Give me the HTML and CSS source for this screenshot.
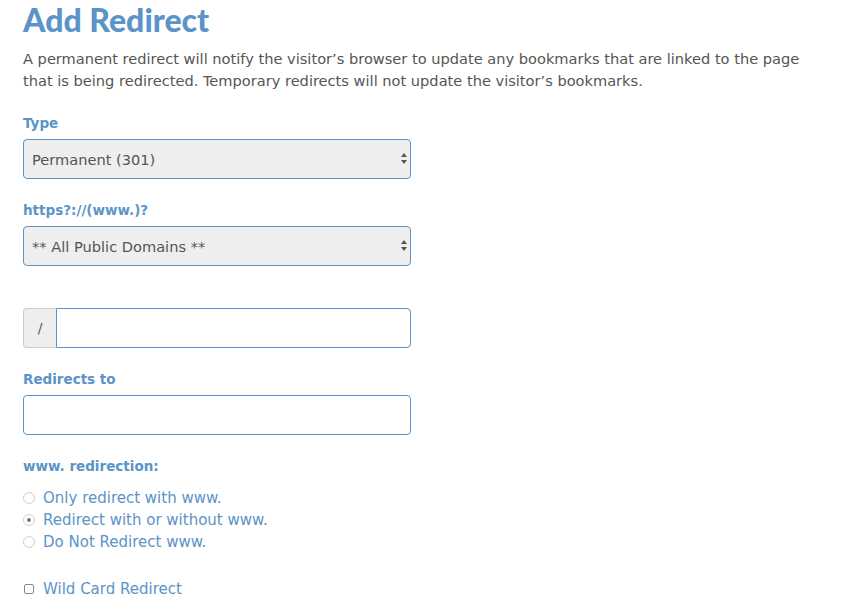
FILE: index.html
```html
<!DOCTYPE html>
<html lang="en">
<head>
    <meta charset="UTF-8">
    <title>Add Redirect</title>
    <link rel="stylesheet" href="styles.css">
</head>
<body>
    <div class="container">
        <h1>Add Redirect</h1>
        <p class="intro">A permanent redirect will notify the visitor’s browser to update any bookmarks that are linked to the page that is being redirected. Temporary redirects will not update the visitor’s bookmarks.</p>

        <form id="redirect-form">
            <div class="form-group">
                <label for="redirect-type">Type</label>
                <div class="select-wrap">
                    <select id="redirect-type">
                        <option value="301">Permanent (301)</option>
                        <option value="302">Temporary (302)</option>
                    </select>
                </div>
            </div>

            <div class="form-group">
                <label for="redirect-domain">https?://(www.)?</label>
                <div class="select-wrap">
                    <select id="redirect-domain">
                        <option value="all">** All Public Domains **</option>
                    </select>
                </div>
            </div>

            <div class="form-group spaced">
                <div class="input-group">
                    <span class="addon">/</span>
                    <input type="text" id="redirect-path">
                </div>
            </div>

            <div class="form-group">
                <label for="redirect-to">Redirects to</label>
                <input type="text" id="redirect-to" class="field">
            </div>

            <div class="form-group">
                <label>www. redirection:</label>
                <div class="radio-list">
                    <label class="choice"><input type="radio" name="www" value="only"> Only redirect with www.</label>
                    <label class="choice"><input type="radio" name="www" value="either" checked> Redirect with or without www.</label>
                    <label class="choice"><input type="radio" name="www" value="none"> Do Not Redirect www.</label>
                </div>
            </div>

            <div class="form-group wildcard">
                <label class="choice"><input type="checkbox" id="wildcard"> Wild Card Redirect</label>
            </div>
        </form>
    </div>
</body>
</html>
```

FILE: styles.css
```css
:root {
    --blue: #5b94c8;
    --text: #555;
    --grey: #eee;
}

* {
    margin: 0;
    padding: 0;
    box-sizing: border-box;
}

body {
    font-family: 'DejaVu Sans', Verdana, sans-serif;
    background-color: white;
    color: var(--text);
}

.container {
    padding: 0 23px;
}

h1 {
    font-family: Lato, 'DejaVu Sans', sans-serif;
    font-size: 32px;
    font-weight: 900;
    color: var(--blue);
    line-height: 40px;
    margin-bottom: 8px;
}

.intro {
    font-size: 14.6px;
    line-height: 22px;
    margin-bottom: 22px;
    max-width: 790px;
}

.form-group {
    margin-bottom: 22px;
}

.form-group.spaced {
    margin-top: 42px;
}

.form-group.wildcard {
    margin-top: 25px;
}

label {
    display: block;
    font-size: 13.5px;
    font-weight: bold;
    color: var(--blue);
    line-height: 18px;
    margin-bottom: 7px;
}

.select-wrap {
    position: relative;
    width: 388px;
}

.select-wrap::after {
    content: '';
    position: absolute;
    right: 4px;
    top: 14px;
    width: 0;
    height: 0;
    border-left: 3.5px solid transparent;
    border-right: 3.5px solid transparent;
    border-bottom: 4px solid #555;
    pointer-events: none;
}

.select-wrap::before {
    content: '';
    position: absolute;
    right: 4px;
    top: 21px;
    width: 0;
    height: 0;
    border-left: 3.5px solid transparent;
    border-right: 3.5px solid transparent;
    border-top: 4px solid #555;
    pointer-events: none;
}

select {
    appearance: none;
    -webkit-appearance: none;
    width: 100%;
    height: 40px;
    padding: 0 8px;
    font-family: inherit;
    font-size: 14.6px;
    color: var(--text);
    background-color: var(--grey);
    border: 1px solid var(--blue);
    border-radius: 4px;
}

.input-group {
    display: flex;
    width: 388px;
    height: 40px;
}

.addon {
    width: 33px;
    background-color: var(--grey);
    border: 1px solid #ccc;
    border-right: none;
    border-radius: 4px 0 0 4px;
    display: flex;
    align-items: center;
    justify-content: center;
    font-size: 14px;
    color: var(--text);
}

.input-group input {
    flex: 1;
    border: 1px solid var(--blue);
    border-radius: 0 4px 4px 0;
    font-family: inherit;
    font-size: 14px;
    padding: 0 9px;
}

.field {
    width: 388px;
    height: 40px;
    border: 1px solid var(--blue);
    border-radius: 4px;
    font-family: inherit;
    font-size: 14px;
    padding: 0 9px;
}

.radio-list {
    margin-top: 12px;
}

.choice {
    display: flex;
    align-items: center;
    font-weight: normal;
    font-size: 15px;
    line-height: 22px;
    margin-bottom: 0;
}

.choice input {
    appearance: none;
    -webkit-appearance: none;
    margin: 0 8px 0 0;
    width: 12px;
    height: 12px;
    border: 1px solid #d0d0d0;
    background-color: white;
    flex-shrink: 0;
}

.choice input[type="radio"] {
    border-radius: 50%;
    position: relative;
}

.choice input[type="radio"]:checked::after {
    content: '';
    position: absolute;
    left: 3px;
    top: 3px;
    width: 4px;
    height: 4px;
    border-radius: 50%;
    background-color: #777;
}

.choice input[type="checkbox"] {
    width: 10px;
    height: 10px;
    margin: 0 9px 0 1px;
    border-color: #888;
    border-radius: 2px;
}
```
